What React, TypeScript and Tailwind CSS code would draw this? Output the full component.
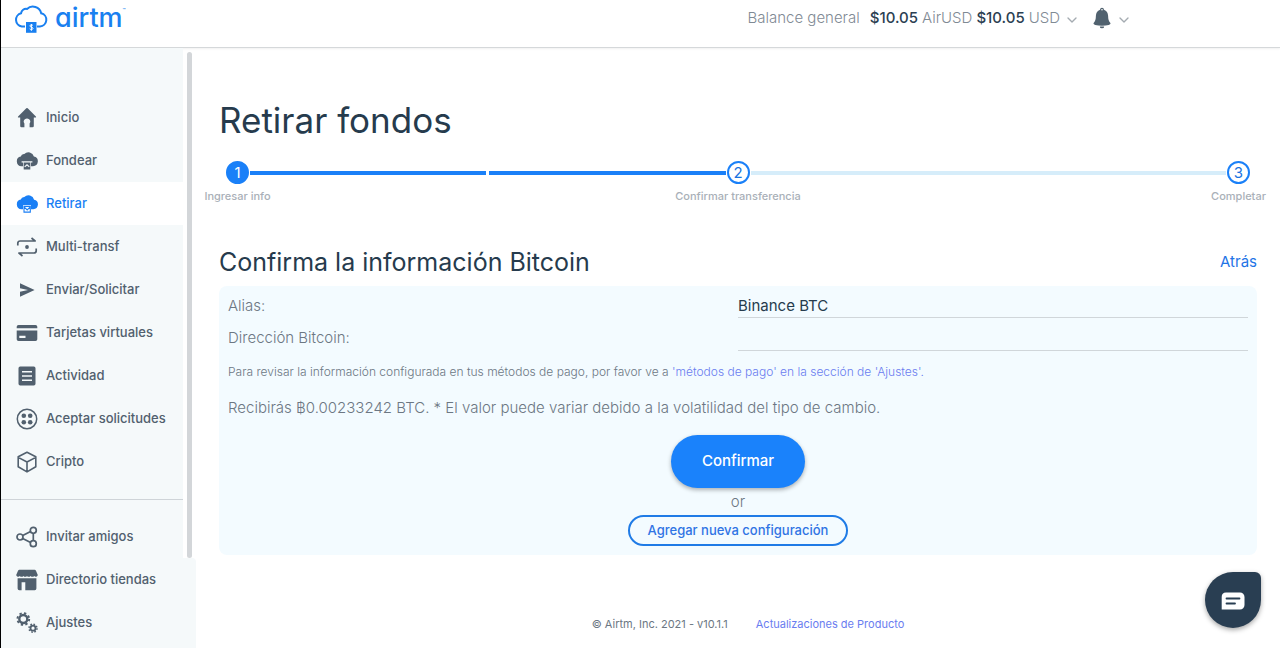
import type { ReactNode } from "react";
import { ChevronDown } from "lucide-react";

function Icon({ children }: { children: ReactNode }) {
  return (
    <svg
      viewBox="0 0 22 22"
      className="size-[22px] shrink-0"
      fill="currentColor"
      stroke="none"
      aria-hidden="true"
    >
      {children}
    </svg>
  );
}

const HomeIcon = () => (
  <Icon>
    <path d="M10.300 1.300a1 1 0 0 1 1.400 0l8.200 8.100c.5.600.2 1.200-.5 1.200H17.800v8.400a1.300 1.300 0 0 1-1.300 1.300h-2.900v-3.700a3.200 3.200 0 1 0-5.200 0v3.700H5.500a1.300 1.300 0 0 1-1.300-1.300v-8.400H2.600c-.7 0-1-.6-.5-1.200Z" />
  </Icon>
);

const CloudUpIcon = () => (
  <Icon>
    <path d="M5.500 16.200a4.900 4.900 0 0 1-.7-9.700 3.300 3.300 0 0 1 3.500-2.500 5.700 5.700 0 0 1 9.600 2.500 4.900 4.900 0 0 1-1.100 9.700Z" />
    <path d="M5.600 11.200h10.800v1.300h-1.500v7H7.100v-7H5.600Z" fill="#f5f9fa" />
    <path d="M7.700 12.500h6.600v7H7.700Z" />
    <path d="m8.700 16.900 2.300-2.100 2.300 2.100" fill="none" stroke="#f5f9fa" strokeWidth="1.200" />
  </Icon>
);

const CloudDownIcon = () => (
  <Icon>
    <path d="M5.500 16.200a4.900 4.900 0 0 1-.7-9.700 3.500 3.500 0 0 1 3.500-2.500 5.800 5.800 0 0 1 9.800 2.700 4.800 4.800 0 0 1-.8 9.500Z" />
    <path d="M7 12.300h8v7.600H7Z" fill="#fff" />
    <path
      d="M8 13.500h6.300v5.600H8Zm.3.600 2.900 2.800 2.800-2.800"
      fill="#fff"
      stroke="currentColor"
      strokeWidth="1.100"
    />
  </Icon>
);

const MultiIcon = () => (
  <Icon>
    <path
      d="M1.800 9.500V7.300a2.300 2.300 0 0 1 2.300-2.300h15l-3.600-3M20.200 12.500v2.200a2.300 2.300 0 0 1-2.300 2.300h-15l3.600 3"
      fill="none"
      stroke="currentColor"
      strokeWidth="1.700"
      strokeLinejoin="round"
    />
    <circle cx="11" cy="11" r="1.900" />
  </Icon>
);

const SendIcon = () => (
  <Icon>
    <path d="M4 4.200 18.600 11 4 17.800v-5L12 11 4 9.200Z" />
  </Icon>
);

const CardIcon = () => (
  <Icon>
    <path d="M2.500 3h17A1.800 1.800 0 0 1 21.300 4.800v1.400H.7V4.800A1.800 1.800 0 0 1 2.500 3Z" />
    <path
      fillRule="evenodd"
      d="M.7 8.400h20.600v8.800a1.800 1.800 0 0 1-1.800 1.800h-17a1.800 1.800 0 0 1-1.800-1.800Zm2.600 5.300v2.200h6.200v-2.200Z"
    />
  </Icon>
);

const ListIcon = () => (
  <Icon>
    <path
      fillRule="evenodd"
      d="M4.200 1.500h13.600A1.700 1.700 0 0 1 19.500 3.200v15.600a1.700 1.700 0 0 1-1.700 1.700H4.200a1.700 1.700 0 0 1-1.700-1.700V3.200A1.700 1.700 0 0 1 4.200 1.500ZM6 6v1.500h10V6Zm0 4.300v1.500h10v-1.500Zm0 4.300v1.500h10v-1.500Z"
    />
  </Icon>
);

const RequestsIcon = () => (
  <Icon>
    <circle cx="11" cy="11" r="9.700" fill="none" stroke="currentColor" strokeWidth="1.500" />
    <circle cx="7.800" cy="7.800" r="2.300" />
    <circle cx="14.200" cy="7.800" r="2.300" />
    <circle cx="7.800" cy="14.200" r="2.300" />
    <circle cx="14.200" cy="14.200" r="2.300" />
  </Icon>
);

const CubeIcon = () => (
  <Icon>
    <path
      d="m11 1.300 8.800 4.400v10.100L11 20.900l-8.800-5.100V5.700ZM2.200 6.400 11 11l8.800-4.600M11 11v9.400"
      fill="none"
      stroke="currentColor"
      strokeWidth="1.600"
      strokeLinejoin="round"
    />
  </Icon>
);

const ShareIcon = () => (
  <Icon>
    <g fill="none" stroke="currentColor" strokeWidth="1.700">
      <circle cx="4" cy="11" r="3" />
      <circle cx="17.300" cy="4.300" r="3" />
      <circle cx="17.300" cy="17.700" r="3" />
      <path d="m6.700 9.600 7.900-4M6.700 12.400l7.900 4M17.300 7.300v7.400" />
    </g>
  </Icon>
);

const StoreIcon = () => (
  <Icon>
    <path d="M4 .8h14c1 0 1.800.5 2.200 1.400L21.800 6a2 2 0 0 1-3.600 1 2.300 2.300 0 0 1-3.600 0 2.300 2.300 0 0 1-3.600 0 2.300 2.300 0 0 1-3.600 0 2.300 2.300 0 0 1-3.600 0A2 2 0 0 1 .2 6l1.600-3.800C2.200 1.300 3 .8 4 .8Z" />
    <path
      fillRule="evenodd"
      d="M1.600 9.300h18.800v10.200a1.700 1.700 0 0 1-1.700 1.700H9.300v-8H5.600v8H3.300a1.700 1.700 0 0 1-1.700-1.700Z"
    />
  </Icon>
);

const GearsIcon = () => (
  <Icon>
    <g fill="none" stroke="currentColor">
      <circle cx="7.300" cy="7" r="4" strokeWidth="2.400" />
      <circle cx="7.300" cy="7" r="5.900" strokeWidth="1.900" strokeDasharray="2.320 2.314" />
      <circle cx="17" cy="16.200" r="2.500" strokeWidth="1.800" />
      <circle cx="17" cy="16.200" r="4" strokeWidth="1.500" strokeDasharray="1.570 1.571" />
    </g>
  </Icon>
);

const BellIcon = () => (
  <svg viewBox="0 0 20 22" className="h-[22px] w-5" fill="#51626f" aria-hidden="true">
    <path
      fillRule="evenodd"
      d="M10 .8a2 2 0 0 1 2 1.900c2.600.9 4 3.200 4.100 6 .1 3.700.6 5.500 2.100 7.100.9 1-.1 1.900-1.400 2.200-4 .9-9.600.9-13.600 0-1.300-.3-2.300-1.200-1.400-2.200 1.500-1.600 2-3.400 2.100-7.100.1-2.800 1.500-5.100 4.100-6A2 2 0 0 1 10 .8Zm0 1.200a.8.8 0 1 0 0 1.600.8.8 0 0 0 0-1.600Z"
    />
    <path d="M7.800 19.400h4.400a2.200 1.900 0 0 1-4.400 0Z" />
  </svg>
);

type Item = { label: string; icon: ReactNode; active?: boolean };

const primary: Item[] = [
  { label: "Inicio", icon: <HomeIcon /> },
  { label: "Fondear", icon: <CloudUpIcon /> },
  { label: "Retirar", icon: <CloudDownIcon />, active: true },
  { label: "Multi-transf", icon: <MultiIcon /> },
  { label: "Enviar/Solicitar", icon: <SendIcon /> },
  { label: "Tarjetas virtuales", icon: <CardIcon /> },
  { label: "Actividad", icon: <ListIcon /> },
  { label: "Aceptar solicitudes", icon: <RequestsIcon /> },
  { label: "Cripto", icon: <CubeIcon /> },
];

function NavLink({ label, icon, active }: Item) {
  return (
    <a
      href="#"
      aria-current={active ? "page" : undefined}
      className={
        "flex h-[43px] items-center gap-2 pl-[15px] text-[13px] font-medium whitespace-nowrap " +
        (active ? "bg-white text-[#1a7ff5]" : "text-[#51606e]")
      }
    >
      {icon}
      {label}
    </a>
  );
}

function Step({ n, label, filled }: { n: number; label: string; filled?: boolean }) {
  return (
    <li className="flex w-[23px] shrink-0 flex-col items-center gap-1">
      <span
        className={
          "flex size-[23px] items-center justify-center rounded-full border-2 border-[#1a80f8] text-[15px] leading-none " +
          (filled ? "bg-[#1a80f8] text-white" : "bg-white text-[#1a73e0]")
        }
      >
        {n}
      </span>
      <span className="text-[11px] leading-4 font-medium whitespace-nowrap text-[#a9b0b8]">
        {label}
      </span>
    </li>
  );
}

export default function App() {
  return (
    <div className="flex min-h-screen flex-col border-l border-black bg-white font-['Inter','Liberation_Sans',sans-serif] text-[#6c7783]">
      <header className="flex h-12 items-start border-b border-[#d5d8da] pl-[13px] shadow-[0_1px_2px_rgba(0,0,0,0.06)]">
        <a href="#" aria-label="airtm" className="flex items-start gap-[7px] pt-1 text-[#1a80f0]">
          <svg viewBox="0 0 34 30" className="h-[30px] w-[34px]" aria-hidden="true">
            <path
              d="M11 22.500H7.800a6.800 6.800 0 0 1-.7-13.300 5 5 0 0 1 5.900-4.300A8.600 8.600 0 0 1 27.200 9.300a6.700 6.700 0 0 1-1.200 13.200H23"
              fill="none"
              stroke="currentColor"
              strokeWidth="2"
            />
            <path d="M12 18h10.500v10.800H12Z" fill="currentColor" />
            <path
              d="M18.900 21.400c-.5-.6-3-.9-3 .5 0 1.600 3.100.8 3.100 2.500 0 1.500-2.700 1.300-3.300.5M17.400 20v6.800"
              fill="none"
              stroke="#fff"
              strokeWidth="1"
            />
          </svg>
          <span className="flex text-[27px] leading-7 font-medium [font-feature-settings:'cv11'_1]">
            airtm<span className="pt-1 text-[5px] leading-none">™</span>
          </span>
        </a>
        <div className="ml-auto flex h-9 items-center pr-[148px] text-[15px] font-light text-[#7f8a94]">
          <span>Balance general</span>
          <button type="button" className="ml-2.5 flex items-center gap-1">
            <span className="font-medium text-[#2b4052]">$10.05</span>
            <span>AirUSD</span>
            <span className="font-medium text-[#2b4052]">$10.05</span>
            <span>USD</span>
            <ChevronDown className="mt-1 size-4" color="#a4abb1" />
          </button>
          <button type="button" aria-label="Notificaciones" className="ml-3 flex items-center gap-1">
            <BellIcon />
            <ChevronDown className="mt-1 size-4" color="#a4abb1" />
          </button>
        </div>
      </header>

      <div className="flex flex-1">
        <nav aria-label="Principal" className="flex w-[195px] shrink-0 flex-col">
          <div className="flex">
            <div className="w-[182px] bg-[#f5f9fa] pt-12">
              {primary.map((item) => (
                <NavLink key={item.label} {...item} />
              ))}
              <div className="mt-4 border-t border-[#cfd4d8] pt-[15px]">
                <NavLink label="Invitar amigos" icon={<ShareIcon />} />
              </div>
            </div>
            <div className="mt-1 ml-1 w-[5px] rounded-sm bg-[#d3d6d9]" />
          </div>
          <div className="flex-1 rounded-tr bg-[#f5f9fa]">
            <NavLink label="Directorio tiendas" icon={<StoreIcon />} />
            <NavLink label="Ajustes" icon={<GearsIcon />} />
          </div>
        </nav>

        <main className="flex min-w-0 flex-1 flex-col px-[23px] pt-[50px]">
          <h1 className="text-[35px] leading-11 text-[#263b4d]">Retirar fondos</h1>

          <ol className="mt-[19px] flex px-[7px]">
            <Step n={1} label="Ingresar info" filled />
            <li aria-hidden="true" className="mx-px mt-[10px] flex h-1 flex-1 gap-[3px]">
              <span className="flex-1 bg-[#1a80f8]" />
              <span className="flex-1 bg-[#1a80f8]" />
            </li>
            <Step n={2} label="Confirmar transferencia" />
            <li aria-hidden="true" className="mx-px mt-[10px] h-1 flex-1 bg-[#d6edfa]" />
            <Step n={3} label="Completar" />
          </ol>

          <div className="mt-[42px] flex items-center justify-between">
            <h2 className="text-[25px] leading-8 text-[#263b4d]">Confirma la información Bitcoin</h2>
            <a href="#" className="text-[15px] text-[#1f74e6]">
              Atrás
            </a>
          </div>

          <form
            className="mt-2 flex flex-col rounded-lg bg-[#f3fbff] px-[9px] pb-[9px]"
            onSubmit={(e) => e.preventDefault()}
          >
            <div className="grid grid-cols-2 text-[15px] font-light">
              <label htmlFor="alias" className="flex h-8 items-center pt-2">
                Alias:
              </label>
              <input
                id="alias"
                defaultValue="Binance BTC"
                className="h-8 border-b border-[#d0d6da] pt-2 font-normal text-[#263b4d] outline-none"
              />
              <label htmlFor="address" className="flex h-[33px] items-center pt-2">
                Dirección Bitcoin:
              </label>
              <input
                id="address"
                className="h-[33px] border-b border-[#d0d6da] pt-2 text-[#263b4d] outline-none"
              />
            </div>
            <p className="mt-[11px] text-[12px] leading-5 font-light">
              Para revisar la información configurada en tus métodos de pago, por favor ve a{" "}
              <a href="#" className="text-[#6a7df0]">
                'métodos de pago' en la sección de 'Ajustes'.
              </a>
            </p>
            <p className="mt-3.5 text-[15px] leading-6 font-light">
              Recibirás ฿0.00233242 BTC. * El valor puede variar debido a la volatilidad del tipo de
              cambio.
            </p>
            <div className="mt-[15px] flex flex-col items-center">
              <button
                type="submit"
                className="h-[53px] w-[134px] rounded-full bg-[#1a82fb] text-[15px] font-medium text-white shadow-[0_2px_4px_rgba(0,0,0,0.3)]"
              >
                Confirmar
              </button>
              <span className="text-[15px] leading-[27px] font-light">or</span>
              <button
                type="button"
                className="h-[31px] w-[220px] rounded-full border-2 border-[#1f7be6] text-[13px] font-medium text-[#2f74e4]"
              >
                Agregar nueva configuración
              </button>
            </div>
          </form>

          <footer className="mt-[59px] flex justify-center gap-7 pl-5 text-[11px] leading-5">
            <span>© Airtm, Inc. 2021 - v10.1.1</span>
            <a href="#" className="text-[#6a7df0]">
              Actualizaciones de Producto
            </a>
          </footer>
        </main>
      </div>

      <button
        type="button"
        aria-label="Chat"
        className="fixed right-[19px] bottom-5 flex size-14 items-center justify-center rounded-[28px] rounded-tr-[6px] bg-[#293e52] shadow-[0_2px_5px_rgba(0,0,0,0.35)]"
      >
        <svg viewBox="0 0 24 18" className="mt-0.5 h-[18px] w-6" aria-hidden="true">
          <path d="M5 .5h14a4.500 4.500 0 0 1 4.500 4.500v8a4.500 4.500 0 0 1-4.500 4.500H.7V5A4.500 4.500 0 0 1 5 .5Z" fill="#fff" />
          <path d="M5.500 6.500h13M5.500 11.500h8.500" stroke="#293e52" strokeWidth="1.800" strokeLinecap="round" />
        </svg>
      </button>
    </div>
  );
}
